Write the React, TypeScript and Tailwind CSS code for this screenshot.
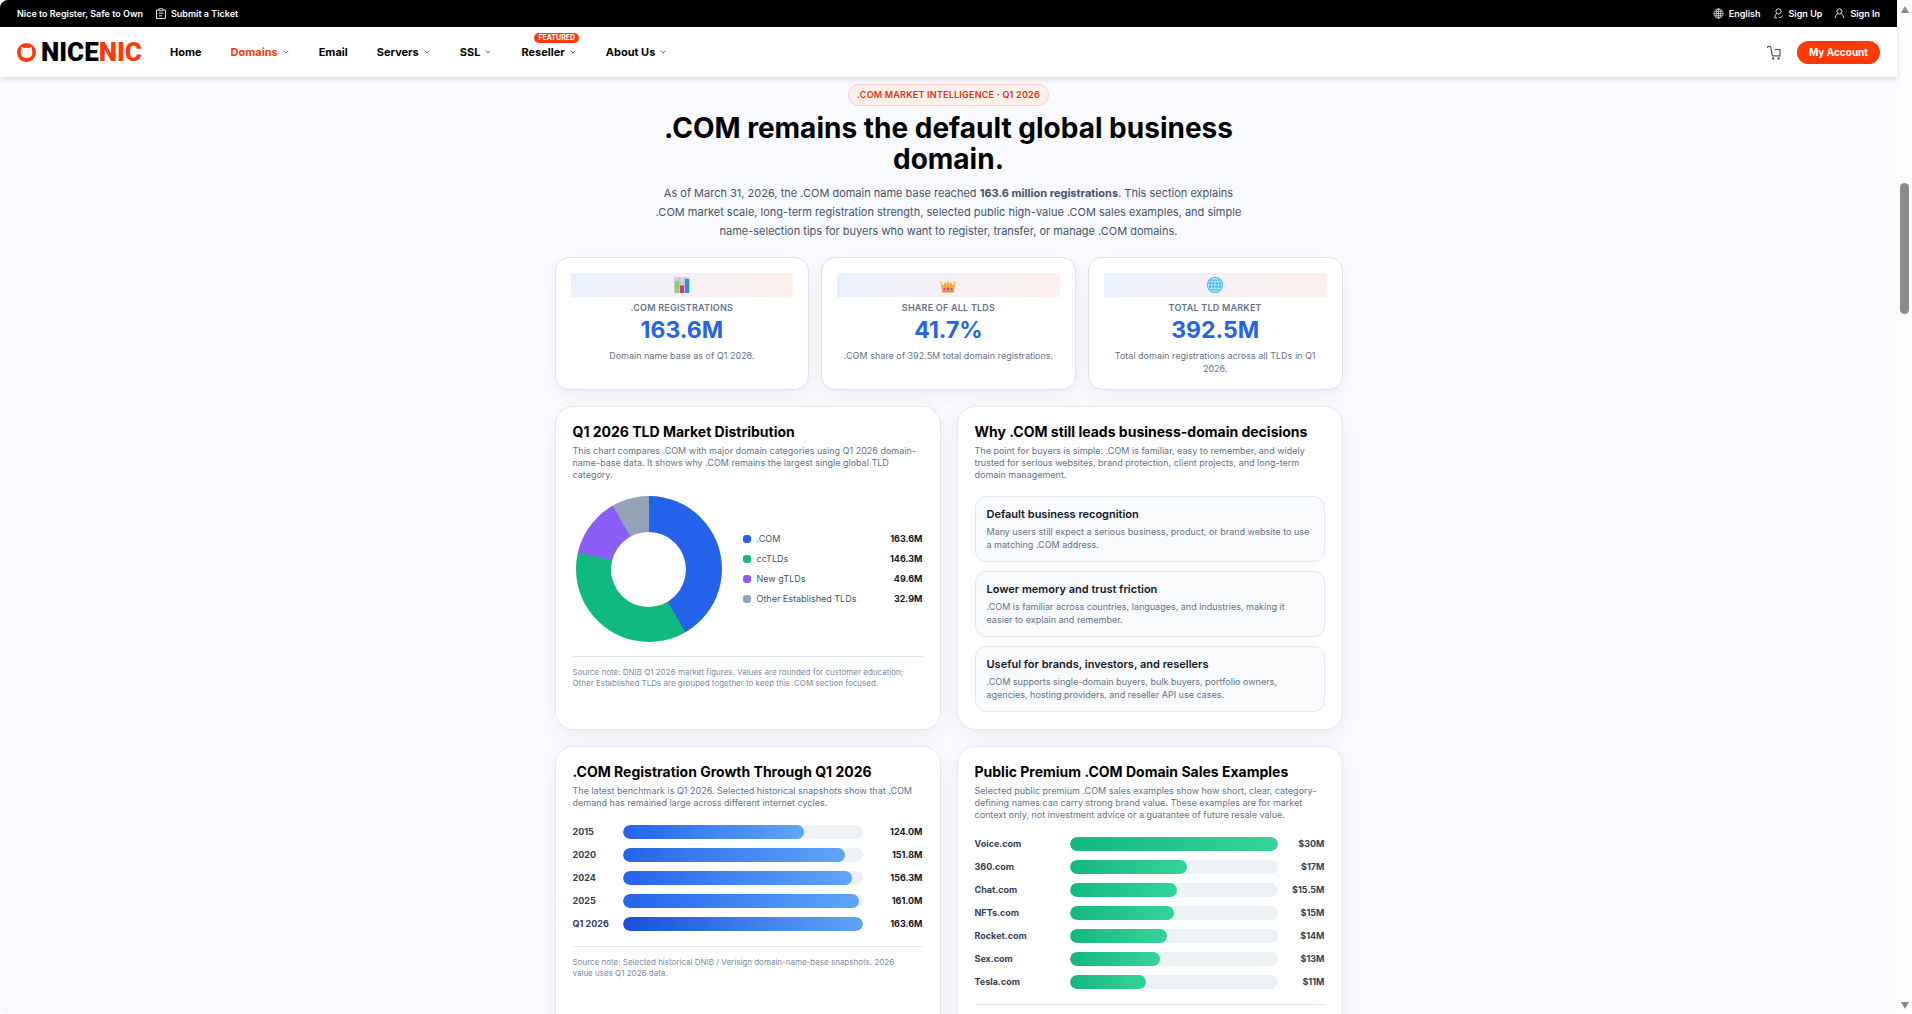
import React from 'react';
import { ChevronDown } from 'lucide-react';

interface NavEntry {
  label: string;
  menu?: boolean;
  active?: boolean;
  badge?: string;
}

interface BarRow {
  label: string;
  value: string;
  amount: number;
  strong?: boolean;
}

const NAV: NavEntry[] = [
  { label: 'Home' },
  { label: 'Domains', menu: true, active: true },
  { label: 'Email' },
  { label: 'Servers', menu: true },
  { label: 'SSL', menu: true },
  { label: 'Reseller', menu: true, badge: 'FEATURED' },
  { label: 'About Us', menu: true },
];

const LEGEND = [
  { label: '.COM', value: '163.6M', color: 'bg-[#2563eb]' },
  { label: 'ccTLDs', value: '146.3M', color: 'bg-[#10b981]' },
  { label: 'New gTLDs', value: '49.6M', color: 'bg-[#8b5cf6]' },
  { label: 'Other Established TLDs', value: '32.9M', color: 'bg-[#94a3b8]' },
];

const REASONS = [
  {
    title: 'Default business recognition',
    lines: ['Many users still expect a serious business, product, or brand website to use', 'a matching .COM address.'],
  },
  {
    title: 'Lower memory and trust friction',
    lines: ['.COM is familiar across countries, languages, and industries, making it', 'easier to explain and remember.'],
  },
  {
    title: 'Useful for brands, investors, and resellers',
    lines: ['.COM supports single-domain buyers, bulk buyers, portfolio owners,', 'agencies, hosting providers, and reseller API use cases.'],
  },
];

const GROWTH: BarRow[] = [
  { label: '2015', value: '124.0M', amount: 124 },
  { label: '2020', value: '151.8M', amount: 151.8 },
  { label: '2024', value: '156.3M', amount: 156.3 },
  { label: '2025', value: '161.0M', amount: 161 },
  { label: 'Q1 2026', value: '163.6M', amount: 163.6, strong: true },
];

const SALES: BarRow[] = [
  { label: 'Voice.com', value: '$30M', amount: 30 },
  { label: '360.com', value: '$17M', amount: 17 },
  { label: 'Chat.com', value: '$15.5M', amount: 15.5 },
  { label: 'NFTs.com', value: '$15M', amount: 15 },
  { label: 'Rocket.com', value: '$14M', amount: 14 },
  { label: 'Sex.com', value: '$13M', amount: 13 },
  { label: 'Tesla.com', value: '$11M', amount: 11 },
];

const Lines: React.FC<{ lines: string[] }> = ({ lines }) => (
  <>
    {lines.map((line, i) => (
      <React.Fragment key={line}>
        {i > 0 && <br />}
        {line}
      </React.Fragment>
    ))}
  </>
);

const TicketIcon = () => (
  <svg viewBox="0 0 12 12" className="w-3 h-3" fill="none" stroke="#ddd" strokeWidth="1">
    <path d="M4 2H1.500v8.500H10.500V2H8" />
    <path d="M4 .8h4v2H4zM4 5.200h4.500M4 7.800h3" />
  </svg>
);

const LanguageIcon = () => (
  <svg viewBox="0 0 11 11" className="w-[11px] h-[11px]" fill="none" stroke="#ddd" strokeWidth="0.8">
    <circle cx="5.500" cy="5.500" r="4.600" />
    <ellipse cx="5.500" cy="5.500" rx="2.200" ry="4.600" />
    <path d="M5.500 1v9M1 5.500h9M1.600 3.400h7.800M1.600 7.600h7.800" />
  </svg>
);

const PersonIcon: React.FC<{ check?: boolean }> = ({ check }) => (
  <svg viewBox="0 0 11 11" className="w-[11px] h-[11px]" fill="none" stroke="#ddd" strokeWidth="1">
    <circle cx="5.500" cy="3.400" r="2.600" />
    {check ? <path d="M3.800 5.400Q1.800 6.800 1.800 9.800H4M6 8.600l1.300 1.400L9.800 7.400" /> : <path d="M3.900 5.500Q1.300 7 1.100 10.200M7.100 5.500Q9.700 7 9.900 10.200" />}
  </svg>
);

const CartIcon = () => (
  <svg viewBox="0 0 16 16" className="w-[15px] h-[15px]" fill="none" stroke="#555" strokeWidth="1.3">
    <path d="M.8 3.200V1.600h3l2 10h8V4.800H8" />
    <circle cx="6.600" cy="14.400" r="0.6" fill="#555" />
    <circle cx="12.400" cy="14.400" r="0.6" fill="#555" />
  </svg>
);

const ChartIcon = () => (
  <svg viewBox="0 0 16 16" className="w-4 h-4">
    <rect width="16" height="16" rx="1.5" fill="#d3cfdc" />
    <path d="M0 5.5h16M0 10.5h16M5.4 0v16M10.6 0v16" stroke="#b9b3c6" strokeWidth="0.6" />
    <rect x="1" y="4" width="4" height="12" fill="#86d860" />
    <rect x="6" y="8.5" width="4" height="7.5" fill="#e62b77" />
    <rect x="11" y="2" width="4" height="14" fill="#2f8ee0" />
  </svg>
);

const CrownIcon = () => (
  <svg viewBox="0 0 16 16" className="w-4 h-4">
    <path d="M2.4 15.2 0.6 6l3.2 2.6L5 4.4l1.8 3L8 2.8l1.2 4.6 1.8-3 1.2 4.2L15.4 6l-1.8 9.2Z" fill="#f9a53c" />
    <path d="M2.2 13.4h11.6l-.3 1.9h-11Z" fill="#e98324" />
    <path d="m3.4 9.4 2 2 2.6-3 2.6 3 2-2" stroke="#ffd06a" strokeWidth="0.8" fill="none" />
    <circle cx="1.2" cy="5.4" r="0.9" fill="#f7b64b" />
    <circle cx="14.8" cy="5.4" r="0.9" fill="#f7b64b" />
    <circle cx="4.4" cy="11.8" r="1" fill="#e8296c" />
    <circle cx="11.6" cy="11.8" r="1" fill="#e8296c" />
    <rect x="6.8" y="10.4" width="2.4" height="2.6" rx="0.6" fill="#2b7de0" />
  </svg>
);

const GlobeIcon = () => (
  <svg viewBox="0 0 16 16" className="w-4 h-4">
    <circle cx="8" cy="8" r="8" fill="#35b0ef" />
    <g fill="none" stroke="#c4efff" strokeWidth="0.9">
      <circle cx="8" cy="8" r="6.7" />
      <ellipse cx="8" cy="8" rx="3.4" ry="6.7" />
      <path d="M8 1.3v13.4M1.3 8h13.4M2.2 4.8h11.6M2.2 11.2h11.6" />
    </g>
  </svg>
);

const Logo = () => (
  <a href="#" className="flex items-center gap-[5px] w-[128px]" aria-label="NiceNIC">
    <svg viewBox="0 0 19 19" className="w-[19px] h-[19px] shrink-0">
      <circle cx="9.5" cy="9.5" r="9.5" fill="#ff3a06" />
      <path d="M4.600 3.800 7 5q2.500-.7 5 0l2.400-1.200.8 3.800q1.200 7.400-5.700 7.400T3.800 7.600Z" fill="#fff" />
    </svg>
    <span className="font-[Roboto] font-black text-[26px] leading-[26px] text-black">
      NICE<span className="text-[#ff3a06]">NIC</span>
    </span>
  </a>
);

const TopBar = () => (
  <div className="flex items-center justify-between h-[27px] px-[17px] bg-black text-white text-[9px] font-semibold">
    <div className="flex items-center gap-3">
      <span>Nice to Register, Safe to Own</span>
      <a href="#" className="flex items-center gap-1">
        <TicketIcon />
        Submit a Ticket
      </a>
    </div>
    <div className="flex items-center gap-3">
      <button className="flex items-center gap-[5px]">
        <LanguageIcon />
        English
      </button>
      <a href="#" className="flex items-center gap-[5px]">
        <PersonIcon check />
        Sign Up
      </a>
      <a href="#" className="flex items-center gap-[5px]">
        <PersonIcon />
        Sign In
      </a>
    </div>
  </div>
);

const Header = () => (
  <header className="relative z-10 flex items-center h-[50px] px-[17px] bg-white shadow-[0_2px_6px_rgba(15,23,42,0.14)]">
    <Logo />
    <nav className="flex items-center gap-[29px] ml-[25px] text-[11px] font-bold text-black">
      {NAV.map((item) => (
        <a key={item.label} href="#" className={`relative flex items-center gap-1 ${item.active ? 'text-[#ff3a06]' : ''}`}>
          {item.label}
          {item.menu && <ChevronDown className="w-2 h-2 text-gray-500" strokeWidth={3} />}
          {item.badge && (
            <span className="absolute -top-[11px] left-[13px] flex items-center h-[10px] px-1 rounded-full bg-[#ff3a06] text-white text-[7px]">
              {item.badge}
            </span>
          )}
        </a>
      ))}
    </nav>
    <div className="flex items-center gap-[15px] ml-auto">
      <button aria-label="Cart">
        <CartIcon />
      </button>
      <button className="h-[23px] px-3 rounded-full bg-[#ff3a06] text-white text-[10px] font-bold">My Account</button>
    </div>
  </header>
);

const StatCard: React.FC<{ icon: React.ReactNode; label: string; value: string; lines: string[] }> = ({ icon, label, value, lines }) => (
  <div className="h-[133px] p-[15px] rounded-[14px] bg-white border border-[#dbe3ef] text-center shadow-[0_6px_18px_rgba(15,23,42,0.05)]">
    <div className="flex items-center justify-center h-6 bg-linear-135 from-[#e8f0ff] to-[#fff0eb]">{icon}</div>
    <div className="mt-[5px] text-[9px] leading-[12px] font-semibold tracking-wide text-[#64748b]">{label}</div>
    <div className="mt-[4px] text-[23px] leading-[24px] font-bold text-[#2563eb]">{value}</div>
    <p className="mt-[7px] text-[9px] leading-[13px] text-[#64748b]">
      <Lines lines={lines} />
    </p>
  </div>
);

const Panel: React.FC<{ title: string; lines: string[]; children: React.ReactNode }> = ({ title, lines, children }) => (
  <section className="px-[17px] pt-[17px] pb-[17px] rounded-[18px] bg-white border border-[#e2e8f0] shadow-[0_8px_24px_rgba(15,23,42,0.05)]">
    <h2 className="text-[14px] leading-[16px] font-bold text-black">{title}</h2>
    <p className="mt-[5px] text-[9px] leading-[12px] text-[#64748b]">
      <Lines lines={lines} />
    </p>
    {children}
  </section>
);

const SourceNote: React.FC<{ lines: string[] }> = ({ lines }) => (
  <p className="mt-[14px] pt-[10px] border-t border-[#e2e8f0] text-[8px] leading-[11px] text-[#7c8ba1]">
    <Lines lines={lines} />
  </p>
);

const Bars: React.FC<{ rows: BarRow[]; max: number; tone: 'blue' | 'green' }> = ({ rows, max, tone }) => (
  <div className="flex flex-col gap-[9px] mt-[16px] mb-[15px]">
    {rows.map((row) => (
      <div
        key={row.label}
        className={`grid items-center h-[14px] gap-[10px] text-[9px] font-bold ${
          tone === 'blue' ? 'grid-cols-[40px_1fr_50px]' : 'grid-cols-[85px_1fr_37px]'
        }`}
      >
        <span className="text-[#334155] whitespace-nowrap">{row.label}</span>
        <div className="h-[14px] rounded-full bg-[#edf2f7] overflow-hidden">
          <div
            className={`h-full rounded-full bg-linear-to-r ${
              tone === 'green' ? 'from-[#10b981] to-[#34d399]' : row.strong ? 'from-[#1d4ed8] to-[#60a5fa]' : 'from-[#2563eb] to-[#60a5fa]'
            }`}
            style={{ width: `${(row.amount / max) * 100}%` }}
          />
        </div>
        <span className={`text-right ${tone === 'blue' ? 'text-[#0f172a]' : 'text-[#334155]'}`}>{row.value}</span>
      </div>
    ))}
  </div>
);

const Distribution = () => (
  <div className="flex items-center mt-[15px]">
    <div className="flex items-center justify-center w-[146px] h-[146px] ml-[3px] shrink-0 rounded-full bg-[conic-gradient(#2563eb_0_41.7%,#10b981_41.7%_78.6%,#8b5cf6_78.6%_91.7%,#94a3b8_91.7%_100%)]">
      <div className="w-[75px] h-[75px] rounded-full bg-white" />
    </div>
    <ul className="flex flex-col flex-1 gap-2 ml-[21px] text-[9px] leading-[12px]">
      {LEGEND.map((item) => (
        <li key={item.label} className="flex items-center">
          <span className={`w-2 h-2 rounded-[3px] mr-[6px] ${item.color}`} />
          <span className="text-[#475569]">{item.label}</span>
          <strong className="ml-auto font-bold text-[#0f172a]">{item.value}</strong>
        </li>
      ))}
    </ul>
  </div>
);

const ScrollTrack = () => (
  <div className="flex flex-col items-center w-[15px] shrink-0 bg-[#fcfcfc]">
    <svg viewBox="0 0 8 7" className="w-2 h-[7px] mt-[6px]" fill="#8b8b8b">
      <path d="M4 0 8 7H0Z" />
    </svg>
    <div className="w-[9px] h-[131px] mt-[170px] rounded-full bg-[#8b8b8b]" />
    <svg viewBox="0 0 8 7" className="w-2 h-[7px] mt-auto mb-[5px]" fill="#8b8b8b">
      <path d="M0 0h8L4 7Z" />
    </svg>
  </div>
);

const App: React.FC = () => {
  return (
    <div className="flex h-screen overflow-hidden rounded-lg font-[Inter,sans-serif]">
      <div className="flex-1 min-w-0 bg-[#f8fafe]">
        <TopBar />
        <Header />
        <main className="max-w-[788px] mx-auto pt-[7px]">
          <div className="flex flex-col items-center text-center">
            <span className="flex items-center h-[22px] px-2 rounded-full border border-[#ffcfc2] bg-[#fff0eb] text-[9px] font-semibold tracking-wide text-[#dc3513]">
              .COM MARKET INTELLIGENCE · Q1 2026
            </span>
            <h1 className="mt-[7px] text-[28px] leading-[31px] font-bold text-black">
              .COM remains the default global business
              <br />
              domain.
            </h1>
            <p className="mt-[9px] text-[11px] leading-[19px] text-[#475569]">
              As of March 31, 2026, the .COM domain name base reached <strong className="font-bold">163.6 million registrations</strong>. This section explains
              <br />
              .COM market scale, long-term registration strength, selected public high-value .COM sales examples, and simple
              <br />
              name-selection tips for buyers who want to register, transfer, or manage .COM domains.
            </p>
          </div>

          <div className="grid grid-cols-3 gap-[12px] mt-[16px]">
            <StatCard icon={<ChartIcon />} label=".COM REGISTRATIONS" value="163.6M" lines={['Domain name base as of Q1 2026.']} />
            <StatCard icon={<CrownIcon />} label="SHARE OF ALL TLDS" value="41.7%" lines={['.COM share of 392.5M total domain registrations.']} />
            <StatCard icon={<GlobeIcon />} label="TOTAL TLD MARKET" value="392.5M" lines={['Total domain registrations across all TLDs in Q1', '2026.']} />
          </div>

          <div className="grid grid-cols-2 gap-[16px] mt-[16px]">
            <Panel
              title="Q1 2026 TLD Market Distribution"
              lines={[
                'This chart compares .COM with major domain categories using Q1 2026 domain-',
                'name-base data. It shows why .COM remains the largest single global TLD',
                'category.',
              ]}
            >
              <Distribution />
              <SourceNote
                lines={[
                  'Source note: DNIB Q1 2026 market figures. Values are rounded for customer education;',
                  'Other Established TLDs are grouped together to keep this .COM section focused.',
                ]}
              />
            </Panel>

            <Panel
              title="Why .COM still leads business-domain decisions"
              lines={[
                'The point for buyers is simple: .COM is familiar, easy to remember, and widely',
                'trusted for serious websites, brand protection, client projects, and long-term',
                'domain management.',
              ]}
            >
              <div className="flex flex-col gap-[9px] mt-[15px]">
                {REASONS.map((reason) => (
                  <div key={reason.title} className="h-[66px] px-[11px] pt-[10px] rounded-[11px] border border-[#e2e8f0] bg-[#f8fafc]">
                    <h3 className="text-[11px] leading-[15px] font-semibold text-[#0f172a]">{reason.title}</h3>
                    <p className="mt-[3px] text-[9px] leading-[13px] text-[#64748b]">
                      <Lines lines={reason.lines} />
                    </p>
                  </div>
                ))}
              </div>
            </Panel>

            <Panel
              title=".COM Registration Growth Through Q1 2026"
              lines={[
                'The latest benchmark is Q1 2026. Selected historical snapshots show that .COM',
                'demand has remained large across different internet cycles.',
              ]}
            >
              <Bars rows={GROWTH} max={163.6} tone="blue" />
              <SourceNote lines={['Source note: Selected historical DNIB / Verisign domain-name-base snapshots. 2026', 'value uses Q1 2026 data.']} />
            </Panel>

            <Panel
              title="Public Premium .COM Domain Sales Examples"
              lines={[
                'Selected public premium .COM sales examples show how short, clear, category-',
                'defining names can carry strong brand value. These examples are for market',
                'context only, not investment advice or a guarantee of future resale value.',
              ]}
            >
              <Bars rows={SALES} max={30} tone="green" />
              <div className="h-[40px] border-t border-[#e2e8f0]" />
            </Panel>
          </div>
        </main>
      </div>
      <ScrollTrack />
    </div>
  );
};

export default App;
